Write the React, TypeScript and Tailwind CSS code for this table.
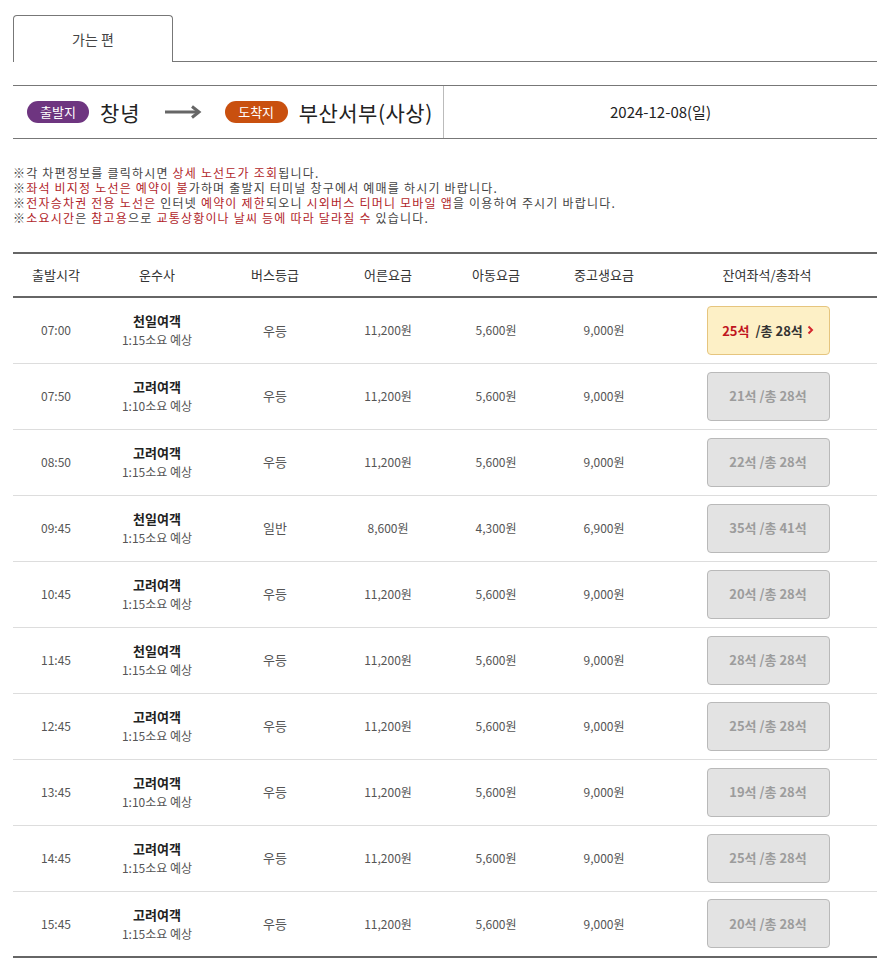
import React from 'react';

interface Trip {
  time: string;
  company: string;
  duration: string;
  grade: string;
  adult: string;
  child: string;
  student: string;
  left: number;
  total: number;
}

const trips: Trip[] = [
  { time: '07:00', company: '천일여객', duration: '1:15', grade: '우등', adult: '11,200원', child: '5,600원', student: '9,000원', left: 25, total: 28 },
  { time: '07:50', company: '고려여객', duration: '1:10', grade: '우등', adult: '11,200원', child: '5,600원', student: '9,000원', left: 21, total: 28 },
  { time: '08:50', company: '고려여객', duration: '1:15', grade: '우등', adult: '11,200원', child: '5,600원', student: '9,000원', left: 22, total: 28 },
  { time: '09:45', company: '천일여객', duration: '1:15', grade: '일반', adult: '8,600원', child: '4,300원', student: '6,900원', left: 35, total: 41 },
  { time: '10:45', company: '고려여객', duration: '1:15', grade: '우등', adult: '11,200원', child: '5,600원', student: '9,000원', left: 20, total: 28 },
  { time: '11:45', company: '천일여객', duration: '1:15', grade: '우등', adult: '11,200원', child: '5,600원', student: '9,000원', left: 28, total: 28 },
  { time: '12:45', company: '고려여객', duration: '1:15', grade: '우등', adult: '11,200원', child: '5,600원', student: '9,000원', left: 25, total: 28 },
  { time: '13:45', company: '고려여객', duration: '1:10', grade: '우등', adult: '11,200원', child: '5,600원', student: '9,000원', left: 19, total: 28 },
  { time: '14:45', company: '고려여객', duration: '1:15', grade: '우등', adult: '11,200원', child: '5,600원', student: '9,000원', left: 25, total: 28 },
  { time: '15:45', company: '고려여객', duration: '1:15', grade: '우등', adult: '11,200원', child: '5,600원', student: '9,000원', left: 20, total: 28 },
];

const Red: React.FC<{ children: React.ReactNode }> = ({ children }) => (
  <span className="text-[#b11e2a]">{children}</span>
);

const SeatButton: React.FC<{ trip: Trip; active?: boolean }> = ({ trip, active }) => {
  if (active) {
    return (
      <button className="flex h-[49px] w-[123px] items-center justify-center rounded-[4px] border border-[#e6c57e] bg-[#fdf0c6] text-[13px] font-bold text-[#333]">
        <span className="text-[#c0161e]">{trip.left}석</span>
        <span className="ml-[6px]">/총 {trip.total}석</span>
        <svg className="ml-[4px]" width="7" height="10" viewBox="0 0 7 10">
          <path d="M1.5 1.5 L5 5 L1.5 8.5" fill="none" stroke="#d4262e" strokeWidth="2" />
        </svg>
      </button>
    );
  }
  return (
    <button className="flex h-[49px] w-[123px] items-center justify-center rounded-[4px] border border-[#b9b9b9] bg-[#e3e3e3] text-[13px] font-bold text-[#9c9c9c]">
      {trip.left}석 /총 {trip.total}석
    </button>
  );
};

export default function App() {
  return (
    <div
      className="min-h-[974px] w-[883px] bg-white pl-[13px] pr-[6px] pt-[15px] text-[#333]"
      style={{ fontFamily: '"Noto Sans CJK KR", "Noto Sans", sans-serif' }}
    >
      {/* tab */}
      <div className="flex items-end">
        <div className="flex h-[47px] w-[160px] items-center justify-center rounded-t-[4px] border border-b-0 border-[#777] text-[14px] text-[#444]">
          가는 편
        </div>
        <div className="flex-1 border-b border-[#777]" />
      </div>

      {/* route */}
      <div className="mt-[23px] flex h-[54px] border-y border-[#777]">
        <div className="flex w-[431px] items-center border-r border-[#bbb] pl-[14px]">
          <span className="flex h-[22px] w-[62px] items-center justify-center rounded-full bg-[#6e3580] text-[13px] text-white">
            출발지
          </span>
          <span className="ml-[11px] text-[21px] leading-none tracking-[1px] text-[#222]">창녕</span>
          <svg className="ml-[24px]" width="37" height="14" viewBox="0 0 37 14">
            <path d="M0 7 H33" stroke="#666" strokeWidth="3" />
            <path d="M27 1.5 L34 7 L27 12.5" fill="none" stroke="#666" strokeWidth="3" />
          </svg>
          <span className="ml-[23px] flex h-[22px] w-[63px] items-center justify-center rounded-full bg-[#c9500f] text-[13px] text-white">
            도착지
          </span>
          <span className="ml-[11px] text-[21px] leading-none tracking-[0.5px] text-[#222]">부산서부(사상)</span>
        </div>
        <div className="flex flex-1 items-center justify-center text-[15px] text-[#222]">2024-12-08(일)</div>
      </div>

      {/* notes */}
      <div className="mt-[26px] text-[12px] leading-[15px] tracking-[1.2px] text-[#444]">
        <p>
          ※각 차편정보를 클릭하시면 <Red>상세 노선도가 조회</Red>됩니다.
        </p>
        <p>
          ※<Red>좌석 비지정 노선은 예약이 불</Red>가하며 출발지 터미널 창구에서 예매를 하시기 바랍니다.
        </p>
        <p>
          ※<Red>전자승차권 전용 노선은</Red> 인터넷 <Red>예약이 제한</Red>되오니 <Red>시외버스 티머니 모바일 앱</Red>을 이용하여 주시기 바랍니다.
        </p>
        <p>
          ※<Red>소요시간</Red>은 <Red>참고용</Red>으로 <Red>교통상황이나 날씨 등에 따라 달라질 수</Red> 있습니다.
        </p>
      </div>

      {/* table */}
      <table className="mt-[27px] w-[864px] table-fixed border-collapse text-center">
        <colgroup>
          <col className="w-[86px]" />
          <col className="w-[116px]" />
          <col className="w-[120px]" />
          <col className="w-[106px]" />
          <col className="w-[110px]" />
          <col className="w-[106px]" />
          <col />
        </colgroup>
        <thead>
          <tr className="h-[44px] border-y-2 border-[#666] text-[13px] text-[#333]">
            <th className="font-normal">출발시각</th>
            <th className="font-normal">운수사</th>
            <th className="font-normal">버스등급</th>
            <th className="font-normal">어른요금</th>
            <th className="font-normal">아동요금</th>
            <th className="font-normal">중고생요금</th>
            <th className="font-normal">잔여좌석/총좌석</th>
          </tr>
        </thead>
        <tbody className="text-[12px] text-[#555]">
          {trips.map((t, i) => (
            <tr
              key={i}
              className={
                i === trips.length - 1
                  ? 'h-[66px] border-b-2 border-[#666]'
                  : 'h-[66px] border-b border-[#ddd]'
              }
            >
              <td>{t.time}</td>
              <td>
                <div className="text-[13px] font-bold leading-[19px] text-[#222]">{t.company}</div>
                <div className="leading-[19px]">{t.duration}소요 예상</div>
              </td>
              <td className="text-[13px]">{t.grade}</td>
              <td>{t.adult}</td>
              <td>{t.child}</td>
              <td>{t.student}</td>
              <td>
                <div className="flex justify-center pl-[2px]">
                  <SeatButton trip={t} active={i === 0} />
                </div>
              </td>
            </tr>
          ))}
        </tbody>
      </table>
    </div>
  );
}
